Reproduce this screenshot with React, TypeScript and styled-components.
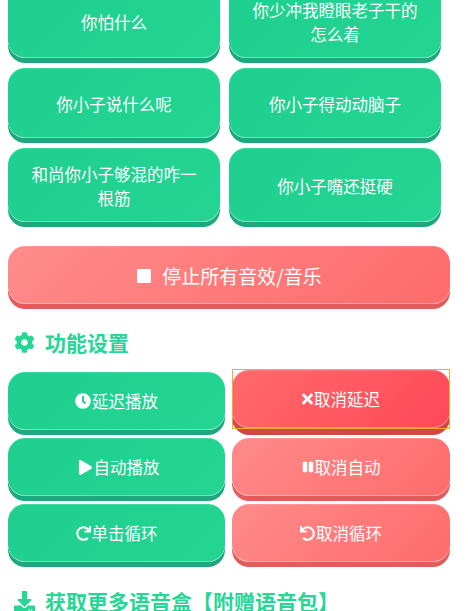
import * as React from 'react'
import styled, {createGlobalStyle} from 'styled-components'
import {FaClock, FaCog, FaDownload, FaPause, FaPlay, FaRedo, FaStop, FaTimes, FaUndo} from 'react-icons/fa'

const GlobalStyle = createGlobalStyle`
  html, body {
    margin: 0;
    height: 611px;
    overflow: hidden;
    background: #fff;
    font-family: "Noto Sans CJK SC", "Noto Sans", sans-serif;
  }
`;

// page is scrolled down a bit, the first row is cut off at the top
const Page = styled.div`
  margin-top: -16px;
  padding: 0 18px 0 8px;
  width: 442px;
`;

const SoundGrid = styled.div`
  display: grid;
  grid-template-columns: 212px 212px;
  grid-template-rows: 74px 70px 74px;
  gap: 10px 9px;
`;

const Button = styled.button<{tone: 'green' | 'red' | 'hot'}>`
  position: relative;
  display: flex;
  align-items: center;
  justify-content: center;
  gap: 1px;
  border: 0;
  padding: 0 20px;
  border-radius: 17px;
  color: #fff;
  font-family: inherit;
  font-size: 16.5px;
  line-height: 24px;
  background: ${p => p.tone === 'green'
    ? 'linear-gradient(135deg, #1fcf8f, #24d493)'
    : p.tone === 'red'
      ? 'linear-gradient(135deg, #ff8b8b, #ff6b6b)'
      : 'linear-gradient(135deg, #ff6b6b, #ff4757)'};
  box-shadow:
    0 ${p => p.tone === 'hot' ? 7 : 5}px 0 ${p => p.tone === 'green' ? '#1fa880' : p.tone === 'red' ? '#e25c5c' : '#d14848'},
    inset 0 -1px 0 rgba(255,255,255,0.35),
    inset 0 1px 0 rgba(255,255,255,0.15);
  ${p => p.tone === 'hot' && `
    transform: translateY(-2px);
    &::after {
      content: "";
      position: absolute;
      inset: -1px 0;
      border: 1.5px solid #eeaa33;
    }
  `}

  svg {
    flex: none;
  }
`;

const SoundLabel = styled.span`
  display: block;
  padding-top: 1px;
  text-align: center;
`;

const StopButton = styled(Button)`
  width: 442px;
  height: 58px;
  margin-top: 24px;
  padding-top: 1px;
  gap: 10px;
  font-size: 19px;
`;

const StopIcon = styled(FaStop)`
  border-radius: 3px;
`;

const PlayIcon = styled(FaPlay)`
  margin-left: 4px;
`;

const CloseIcon = styled(FaTimes)`
  width: 11px;
  height: 16px;
`;

const SectionTitle = styled.h2`
  display: flex;
  align-items: center;
  gap: 10px;
  margin: 0;
  padding-left: 6px;
  color: #25d695;
  font-size: 21px;
  font-weight: 700;
  line-height: 30px;
`;

const SettingsTitle = styled(SectionTitle)`
  margin-top: 23px;
`;

const MoreTitle = styled(SectionTitle)`
  margin-top: 24px;
`;

const SettingsGrid = styled.div`
  display: grid;
  grid-template-columns: 217px 218px;
  grid-auto-rows: 58px;
  gap: 8px 7px;
  margin-top: 15px;
`;

const sounds = [
    '你怕什么',
    '你少冲我瞪眼老子干的怎么着',
    '你小子说什么呢',
    '你小子得动动脑子',
    '和尚你小子够混的咋一根筋',
    '你小子嘴还挺硬',
];

const settings: {label: string, icon: React.ReactNode, tone: 'green' | 'red' | 'hot'}[] = [
    {label: '延迟播放', icon: <FaClock size={16}/>, tone: 'green'},
    {label: '取消延迟', icon: <CloseIcon/>, tone: 'hot'},
    {label: '自动播放', icon: <PlayIcon size={15}/>, tone: 'green'},
    {label: '取消自动', icon: <FaPause size={12}/>, tone: 'red'},
    {label: '单击循环', icon: <FaRedo size={15}/>, tone: 'green'},
    {label: '取消循环', icon: <FaUndo size={15}/>, tone: 'red'},
];

export default function App() {
    return <Page>
        <GlobalStyle/>
        <SoundGrid>
            {sounds.map((sound, id) =>
                <Button key={id} tone="green"><SoundLabel>{sound}</SoundLabel></Button>)}
        </SoundGrid>
        <StopButton tone="red"><StopIcon size={16}/>停止所有音效/音乐</StopButton>
        <SettingsTitle><FaCog size={21}/>功能设置</SettingsTitle>
        <SettingsGrid>
            {settings.map((item, id) =>
                <Button key={id} tone={item.tone}>{item.icon}{item.label}</Button>)}
        </SettingsGrid>
        <MoreTitle><FaDownload size={21}/>获取更多语音盒【附赠语音包】</MoreTitle>
    </Page>;
}
